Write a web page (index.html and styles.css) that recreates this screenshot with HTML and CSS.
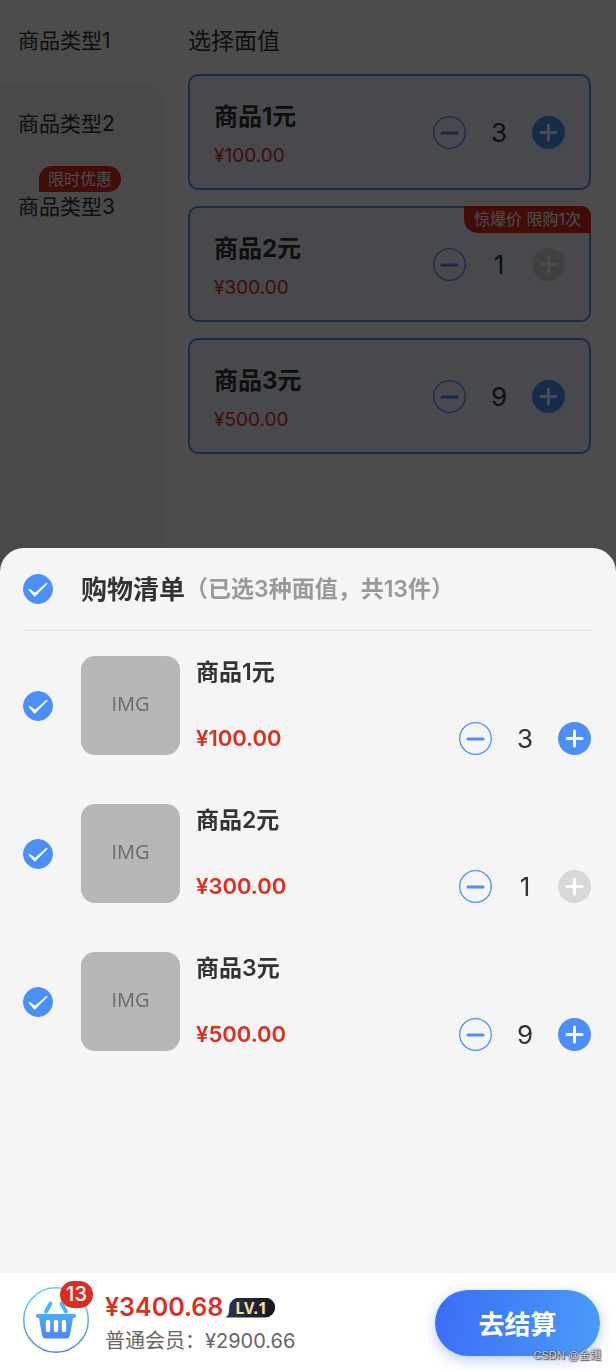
FILE: index.html
```
<!DOCTYPE html>
<html lang="zh-CN">
<head>
    <meta charset="UTF-8">
    <meta name="viewport" content="width=device-width, initial-scale=1.0">
    <title>购物清单</title>
    <link rel="stylesheet" href="styles.css">
</head>
<body>
    <svg class="sprite" aria-hidden="true">
        <symbol id="minus" viewBox="0 0 33 33">
            <circle cx="16.5" cy="16.5" r="15.8" fill="none" stroke="currentColor" stroke-width="1.3"/>
            <path d="M9 17h15" stroke="currentColor" stroke-width="3" stroke-linecap="round"/>
        </symbol>
        <symbol id="plus" viewBox="0 0 33 33">
            <circle cx="16.5" cy="16.5" r="16.5" fill="currentColor"/>
            <path d="M9 16.5h15M16.5 9v15" stroke="#fff" stroke-width="3" stroke-linecap="round"/>
        </symbol>
        <symbol id="check" viewBox="0 0 30 30">
            <path d="M5.400 15.800Q6 14.800 7.200 15.200L12 18.800 23.200 9Q24.800 8.800 24.300 10L12.300 22.200Q11.600 22.700 10.900 22.100z" fill="#fff"/>
        </symbol>
    </svg>

    <main class="page">
        <nav class="types">
            <a class="type active" href="#type1">商品类型1</a>
            <a class="type" href="#type2">商品类型2</a>
            <a class="type" href="#type3">商品类型3<span class="type-tag">限时优惠</span></a>
        </nav>
        <section class="values">
            <h2 class="values-title">选择面值</h2>
            <div class="card">
                <div class="card-info">
                    <h3 class="card-name">商品1元</h3>
                    <p class="card-price">¥100.00</p>
                </div>
                <div class="stepper">
                    <button class="step" aria-label="减少"><svg><use href="#minus"/></svg></button>
                    <span class="count">3</span>
                    <button class="step" aria-label="增加"><svg><use href="#plus"/></svg></button>
                </div>
            </div>
            <div class="card">
                <span class="card-tag">惊爆价 限购1次</span>
                <div class="card-info">
                    <h3 class="card-name">商品2元</h3>
                    <p class="card-price">¥300.00</p>
                </div>
                <div class="stepper">
                    <button class="step" aria-label="减少"><svg><use href="#minus"/></svg></button>
                    <span class="count">1</span>
                    <button class="step" aria-label="增加" disabled><svg><use href="#plus"/></svg></button>
                </div>
            </div>
            <div class="card">
                <div class="card-info">
                    <h3 class="card-name">商品3元</h3>
                    <p class="card-price">¥500.00</p>
                </div>
                <div class="stepper">
                    <button class="step" aria-label="减少"><svg><use href="#minus"/></svg></button>
                    <span class="count">9</span>
                    <button class="step" aria-label="增加"><svg><use href="#plus"/></svg></button>
                </div>
            </div>
        </section>
    </main>

    <div class="mask">
        <section class="sheet">
            <header class="sheet-head">
                <label class="check">
                    <input type="checkbox" aria-label="全选" checked>
                    <svg><use href="#check"/></svg>
                </label>
                <h2 class="sheet-title">购物清单<span class="sheet-sub">（已选3种面值，共13件）</span></h2>
            </header>
            <ul class="goods">
                <li class="item">
                    <label class="check">
                        <input type="checkbox" aria-label="商品1元" checked>
                        <svg><use href="#check"/></svg>
                    </label>
                    <div class="thumb">IMG</div>
                    <div class="item-info">
                        <h3 class="item-name">商品1元</h3>
                        <p class="item-price">¥100.00</p>
                    </div>
                    <div class="stepper">
                        <button class="step" aria-label="减少"><svg><use href="#minus"/></svg></button>
                        <span class="count">3</span>
                        <button class="step" aria-label="增加"><svg><use href="#plus"/></svg></button>
                    </div>
                </li>
                <li class="item">
                    <label class="check">
                        <input type="checkbox" aria-label="商品2元" checked>
                        <svg><use href="#check"/></svg>
                    </label>
                    <div class="thumb">IMG</div>
                    <div class="item-info">
                        <h3 class="item-name">商品2元</h3>
                        <p class="item-price">¥300.00</p>
                    </div>
                    <div class="stepper">
                        <button class="step" aria-label="减少"><svg><use href="#minus"/></svg></button>
                        <span class="count">1</span>
                        <button class="step" aria-label="增加" disabled><svg><use href="#plus"/></svg></button>
                    </div>
                </li>
                <li class="item">
                    <label class="check">
                        <input type="checkbox" aria-label="商品3元" checked>
                        <svg><use href="#check"/></svg>
                    </label>
                    <div class="thumb">IMG</div>
                    <div class="item-info">
                        <h3 class="item-name">商品3元</h3>
                        <p class="item-price">¥500.00</p>
                    </div>
                    <div class="stepper">
                        <button class="step" aria-label="减少"><svg><use href="#minus"/></svg></button>
                        <span class="count">9</span>
                        <button class="step" aria-label="增加"><svg><use href="#plus"/></svg></button>
                    </div>
                </li>
            </ul>
            <footer class="bar">
                <button class="cart" aria-label="购物车">
                    <svg class="cart-icon" viewBox="0 0 66 66">
                        <defs>
                            <linearGradient id="cartLine" x1="0" y1="0" x2="0" y2="66" gradientUnits="userSpaceOnUse">
                                <stop offset="0" stop-color="#5ccdf8"/>
                                <stop offset="1" stop-color="#4a84f7"/>
                            </linearGradient>
                            <linearGradient id="cartFill" x1="0" y1="14" x2="0" y2="52" gradientUnits="userSpaceOnUse">
                                <stop offset="0" stop-color="#4cc0fb"/>
                                <stop offset="1" stop-color="#4d84f8"/>
                            </linearGradient>
                        </defs>
                        <circle cx="33" cy="33" r="32.3" fill="none" stroke="url(#cartLine)" stroke-width="1.4"/>
                        <path d="M27.500 16.500 23 24.500M38.500 16.500 43 24.500" fill="none" stroke="url(#cartFill)" stroke-width="4" stroke-linecap="round"/>
                        <path d="M15 27h36q2 0 2 2t-2 2h-1l-3 17q-.6 3.500-4 3.500H23q-3.400 0-4-3.500l-3-17h-1q-2 0-2-2t2-2z" fill="url(#cartFill)"/>
                        <path d="M25 35v8M33 35v8M41 35v8" stroke="#fff" stroke-width="4.400" stroke-linecap="round"/>
                    </svg>
                    <span class="cart-count">13</span>
                </button>
                <div class="total">
                    <p class="total-price">¥3400.68<span class="level">LV.1</span></p>
                    <p class="total-normal">普通会员：¥2900.66</p>
                </div>
                <button class="pay">去结算</button>
                <span class="watermark">CSDN @金翅</span>
            </footer>
        </section>
    </div>
</body>
</html>
```

FILE: styles.css
```
* {
    box-sizing: border-box;
    margin: 0;
    padding: 0;
}

body {
    font-family: Inter, "Noto Sans CJK SC", sans-serif;
    color: #333;
    background: #fff;
}

button {
    font: inherit;
    border: none;
    background: none;
    cursor: pointer;
}

.sprite {
    display: none;
}

/* product page */
.page {
    display: flex;
    min-height: 100vh;
}

.types {
    width: 163px;
    flex-shrink: 0;
    display: flex;
    flex-direction: column;
    background: linear-gradient(#fff 120px, #f5f5f5 120px);
}

.type {
    position: relative;
    height: 83px;
    padding-left: 18px;
    line-height: 82px;
    font-size: 21px;
    color: #333;
    text-decoration: none;
    background: #f5f5f5;
}

.type.active {
    background: #fff;
}

.type.active + .type {
    border-top-right-radius: 20px;
}

.type-tag {
    position: absolute;
    top: 0;
    left: 39px;
    height: 26px;
    padding: 0 9px;
    line-height: 26px;
    font-size: 16px;
    color: #fff;
    background: #dd2e20;
    border-radius: 14px 14px 14px 0;
}

.values {
    flex: 1;
    padding: 24px 25px;
    display: flex;
    flex-direction: column;
    gap: 16px;
}

.values-title {
    line-height: 34px;
    font-size: 23px;
    font-weight: 400;
}

.card {
    position: relative;
    height: 116px;
    padding: 0 24px;
    display: flex;
    align-items: center;
    justify-content: space-between;
    background: #f0f3ff;
    border: 2px solid #4d8ff8;
    border-radius: 10px;
}

.card-info {
    padding-top: 8px;
}

.card-name {
    line-height: 40px;
    font-size: 24px;
    font-weight: 700;
}

.card-price {
    line-height: 38px;
    font-size: 19px;
    color: #dd2e20;
}

.card-tag {
    position: absolute;
    top: -2px;
    right: -2px;
    height: 27px;
    padding: 0 10px;
    line-height: 26px;
    font-size: 16px;
    color: #fff;
    background: #dd2e20;
    border-radius: 0 10px 0 14px;
}

.stepper {
    display: flex;
    align-items: center;
}

.step {
    width: 33px;
    height: 33px;
    color: #4d8ff8;
}

.step svg {
    display: block;
    width: 33px;
    height: 33px;
}

.step:disabled {
    color: #d8d8d8;
}

.count {
    width: 66px;
    line-height: 33px;
    font-size: 26px;
    text-align: center;
}

/* shopping list popup */
.mask {
    position: fixed;
    inset: 0;
    display: flex;
    flex-direction: column;
    justify-content: flex-end;
    background: rgba(0, 0, 0, 0.7);
}

.sheet {
    height: 60vh;
    display: flex;
    flex-direction: column;
    background: #f5f5f5;
    border-radius: 24px 24px 0 0;
}

.sheet-head {
    height: 83px;
    margin: 0 25px 0 23px;
    display: flex;
    align-items: center;
    gap: 28px;
    border-bottom: 2px solid #e2e8ed;
}

.sheet-title {
    display: flex;
    align-items: center;
    padding-bottom: 3px;
    font-size: 26px;
    font-weight: 600;
}

.sheet-sub {
    font-size: 23px;
    color: #999;
}

.check {
    display: grid;
    cursor: pointer;
}

.check input,
.check svg {
    grid-area: 1 / 1;
    width: 30px;
    height: 30px;
}

.check input {
    appearance: none;
    border: 1px solid #ccc;
    border-radius: 50%;
}

.check input:checked {
    background: #4d8ff8;
    border-color: #4d8ff8;
}

.check svg {
    visibility: hidden;
    pointer-events: none;
}

.check input:checked + svg {
    visibility: visible;
}

.goods {
    flex: 1;
    min-height: 0;
    padding: 25px 25px 0 23px;
    display: flex;
    flex-direction: column;
    gap: 49px;
    overflow: hidden;
    list-style: none;
}

.item {
    display: flex;
    align-items: center;
}

.thumb {
    width: 99px;
    height: 99px;
    margin: 0 16px 0 28px;
    line-height: 95px;
    font-family: "Open Sans", "Noto Sans", sans-serif;
    font-size: 20px;
    text-align: center;
    color: #6b6b6b;
    background: #b7b7b7;
    border-radius: 14px;
}

.item-info {
    flex: 1;
    align-self: stretch;
    display: flex;
    flex-direction: column;
    justify-content: space-between;
}

.item-name {
    line-height: 33px;
    font-size: 23px;
    font-weight: 600;
}

.item-price {
    line-height: 33px;
    font-size: 22px;
    font-weight: 600;
    color: #dd2e20;
}

.item .stepper {
    align-self: flex-end;
}

/* bottom bar */
.bar {
    position: relative;
    height: 97px;
    padding: 2px 16px 0 23px;
    display: flex;
    align-items: center;
    background: #fff;
}

.cart {
    position: relative;
    width: 66px;
    height: 66px;
    margin-bottom: 6px;
}

.cart-icon {
    display: block;
}

.cart-count {
    position: absolute;
    top: -6px;
    right: -4px;
    width: 33px;
    height: 27px;
    line-height: 27px;
    font-size: 20px;
    font-weight: 500;
    text-align: center;
    color: #fff;
    background: #dd2e20;
    border-radius: 14px;
}

.total {
    flex: 1;
    padding: 2px 0 0 16px;
}

.total-price {
    display: flex;
    align-items: center;
    line-height: 35px;
    font-size: 25px;
    font-weight: 600;
    color: #dd2e20;
}

.level {
    width: 50px;
    height: 20px;
    margin-left: 2px;
    padding-left: 2px;
    line-height: 20px;
    font-family: "Noto Sans", sans-serif;
    font-size: 16px;
    font-weight: 700;
    text-align: center;
    color: #f6e0a0;
    background: linear-gradient(90deg, #2d3350, #14161f);
    clip-path: path("M14 0H40a10 10 0 0 1 0 20H0Q4 18 4 12V10A10 10 0 0 1 14 0Z");
}

.total-normal {
    line-height: 32px;
    font-size: 20px;
    color: #666;
}

.pay {
    width: 165px;
    height: 66px;
    font-size: 26px;
    font-weight: 700;
    color: #fff;
    background: linear-gradient(100deg, #3a6df6, #4a9cf9);
    border-radius: 33px;
    box-shadow: 0 4px 14px rgba(58, 109, 246, 0.35);
}

.watermark {
    position: absolute;
    right: 15px;
    bottom: 6px;
    line-height: 18px;
    font-family: "Liberation Sans", "Noto Sans CJK SC", sans-serif;
    font-size: 11px;
    color: #d5d5d5;
    text-shadow: 0 0 2px #333, 1px 1px 1px #555;
}
```
